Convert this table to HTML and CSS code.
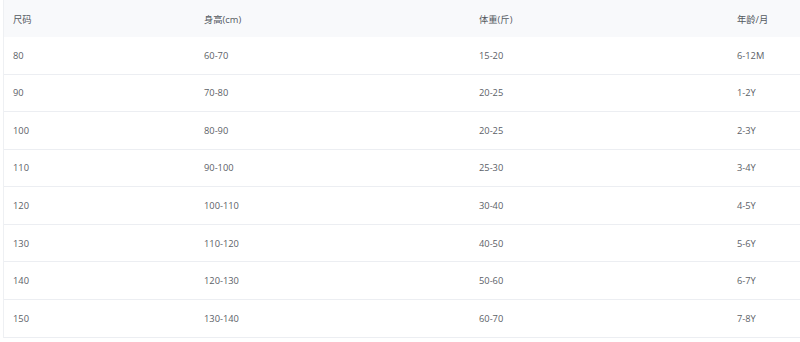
FILE: index.html
```html
<!DOCTYPE html>
<html lang="zh">
<head>
<meta charset="utf-8">
<link rel="stylesheet" href="styles.css">
</head>
<body>
<div class="table">
  <div class="row head"><div>尺码</div><div>身高(cm)</div><div>体重(斤)</div><div>年龄/月</div></div>
  <div class="row"><div>80</div><div>60-70</div><div>15-20</div><div>6-12M</div></div>
  <div class="row"><div>90</div><div>70-80</div><div>20-25</div><div>1-2Y</div></div>
  <div class="row"><div>100</div><div>80-90</div><div>20-25</div><div>2-3Y</div></div>
  <div class="row"><div>110</div><div>90-100</div><div>25-30</div><div>3-4Y</div></div>
  <div class="row"><div>120</div><div>100-110</div><div>30-40</div><div>4-5Y</div></div>
  <div class="row"><div>130</div><div>110-120</div><div>40-50</div><div>5-6Y</div></div>
  <div class="row"><div>140</div><div>120-130</div><div>50-60</div><div>6-7Y</div></div>
  <div class="row"><div>150</div><div>130-140</div><div>60-70</div><div>7-8Y</div></div>
</div>
</body>
</html>
```
FILE: styles.css
```css
html, body {
  margin: 0;
  padding: 0;
  background: #ffffff;
}
.table {
  margin-left: 3px;
  border-left: 1px solid #eef0f3;
  font-family: "Open Sans", "Noto Sans CJK SC", sans-serif;
  font-size: 9.3px;
  color: #5c6167;
}
.row {
  display: grid;
  grid-template-columns: 191px 275px 258px 1fr;
  height: 37.57px;
  box-sizing: border-box;
  border-bottom: 1px solid #eceef2;
  align-items: center;
}
.row > div {
  padding-left: 9px;
}
.row.head {
  background: #f8f9fb;
  border-bottom: none;
  height: 37px;
  color: #53585e;
}
```
